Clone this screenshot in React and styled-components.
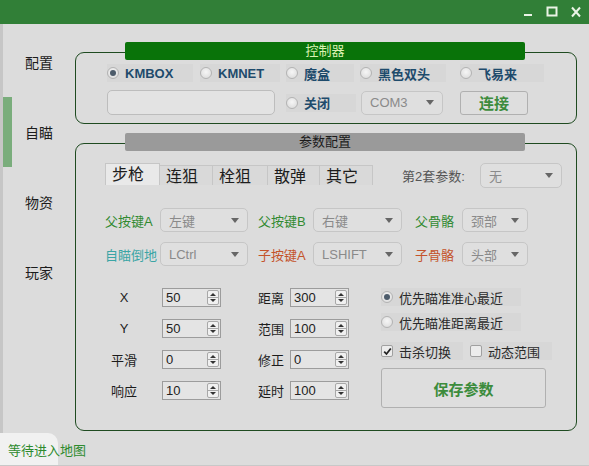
import React from 'react';
import styled, { createGlobalStyle } from 'styled-components';

const GlobalStyle = createGlobalStyle`
  html, body {
    margin: 0;
    padding: 0;
  }
  body {
    font-family: "Liberation Sans", "Noto Sans CJK SC", sans-serif;
    background: #dcdcdc;
  }
`;

const Window = styled.div`
  width: 589px;
  height: 466px;
  display: flex;
  flex-direction: column;
  background: #dcdcdc;
  overflow: hidden;
`;

const TitleBar = styled.div`
  height: 24px;
  flex: none;
  background: #317f37;
  display: flex;
  justify-content: flex-end;
  align-items: center;
  padding-right: 1px;
`;

const WinButton = styled.div`
  width: 24px;
  height: 24px;
  display: flex;
  align-items: center;
  justify-content: center;
`;

const Body = styled.div`
  flex: 1;
  display: flex;
  min-height: 0;
`;

const Sidebar = styled.nav`
  width: 72px;
  flex: none;
  border-left: 3px solid #c6c6c6;
  padding-top: 3px;
`;

const NavItem = styled.div`
  height: 70px;
  display: flex;
  align-items: center;
  padding-left: 22px;
  font-size: 14px;
  color: #1c1c1c;
  box-shadow: ${p => (p.$active ? 'inset 9px 0 0 #7aad7c' : 'none')};
`;

const Main = styled.main`
  flex: 1;
  padding: 18px 12px 0 0;
  display: flex;
  flex-direction: column;
`;

const Group = styled.section`
  display: flex;
  flex-direction: column;
  margin-bottom: 9px;
`;

const Legend = styled.div`
  height: 18px;
  margin: 0 52px 0 50px;
  background: ${p => p.$bg};
  color: ${p => p.$color};
  border-radius: 2px;
  font-size: 13px;
  line-height: 18px;
  text-align: center;
  position: relative;
  z-index: 1;
`;

const Box = styled.div`
  margin-top: -8px;
  height: ${p => p.$h}px;
  box-sizing: border-box;
  border: 1px solid #1f4b21;
  border-radius: 9px;
  padding: ${p => p.$pad};
  display: flex;
  flex-direction: column;
`;

const RadioRow = styled.div`
  display: grid;
  grid-template-columns: 93px 86px 74px 100px 84px;
  height: 18px;
  align-items: center;
`;

const RadioItem = styled.label`
  display: flex;
  align-items: center;
  gap: 6px;
  height: 18px;
  width: ${p => p.$w}px;
  background: ${p => (p.$plain ? 'transparent' : '#d7d7d7')};
  font-size: 13px;
  font-weight: ${p => (p.$bold ? 700 : 400)};
  color: ${p => (p.$bold ? '#1e4b6c' : '#2a2a2a')};
  white-space: nowrap;
`;

const Dot = styled.span`
  width: 12px;
  height: 12px;
  flex: none;
  box-sizing: border-box;
  border-radius: 50%;
  border: 1px solid #b3b3b3;
  background: radial-gradient(circle at 50% 40%, #f6f6f6, #d8d8d8);
  display: flex;
  align-items: center;
  justify-content: center;

  &::after {
    content: '';
    width: 6px;
    height: 6px;
    border-radius: 50%;
    background: ${p => (p.$on ? '#4d5c6b' : 'transparent')};
  }
`;

const ControlRow = styled.div`
  display: flex;
  align-items: center;
  margin-top: 8px;
`;

const TextInput = styled.div`
  width: 168px;
  height: 25px;
  box-sizing: border-box;
  border: 1px solid #bdbdbd;
  border-radius: 5px;
  background: #e3e3e3;
  margin-right: 11px;
`;

const Combo = styled.div`
  width: ${p => p.$w}px;
  height: ${p => p.$h || 24}px;
  box-sizing: border-box;
  border: 1px solid #c6c6c6;
  border-radius: 5px;
  background: #dfdfdf;
  display: flex;
  align-items: center;
  justify-content: space-between;
  padding: 0 8px 0 8px;
  font-size: 13px;
  color: #8a8a8a;
  margin-left: ${p => p.$ml || 0}px;

  &::after {
    content: '';
    border-left: 4px solid transparent;
    border-right: 4px solid transparent;
    border-top: 5px solid #666;
  }
`;

const Button = styled.button`
  width: ${p => p.$w}px;
  height: ${p => p.$h}px;
  margin-left: ${p => p.$ml || 0}px;
  margin-top: ${p => p.$mt || 0}px;
  border: 1px solid #b0b0b0;
  border-radius: 3px;
  background: #dedede;
  color: #3c8c3c;
  font-family: "Noto Sans CJK SC", sans-serif;
  font-weight: 700;
  font-size: 15px;
  padding: 0;
`;

const TopRow = styled.div`
  display: flex;
  align-items: center;
  height: 25px;
`;

const Tabs = styled.div`
  display: flex;
  align-self: flex-start;
  height: 22px;
`;

const Tab = styled.div`
  width: ${p => p.$w}px;
  box-sizing: border-box;
  margin-top: ${p => (p.$active ? 0 : 2)}px;
  height: ${p => (p.$active ? 22 : 20)}px;
  background: ${p => (p.$active ? '#e9e9e9' : '#d9d9d9')};
  border: 1px solid #c6c6c6;
  border-bottom: none;
  border-left: ${p => (p.$active ? '1px solid #c6c6c6' : 'none')};
  padding-left: 6px;
  font-size: 16px;
  line-height: 22px;
  color: #1d1d1d;
  overflow: hidden;
`;

const SetLabel = styled.span`
  margin-left: 29px;
  width: 78px;
  font-size: 13px;
  color: #555;
`;

const ComboGrid = styled.div`
  display: grid;
  grid-template-columns: 55px 98px 55px 102px 47px 66px;
  grid-auto-rows: 24px;
  row-gap: 10px;
  margin-top: 20px;
  align-items: center;
`;

const KeyLabel = styled.span`
  font-size: 13px;
  color: ${p => p.$color};
  white-space: nowrap;
`;

const Lower = styled.div`
  display: flex;
  margin-top: 22px;
`;

const SpinGrid = styled.div`
  display: grid;
  grid-template-columns: 57px 96px 32px 59px;
  grid-auto-rows: 19px;
  row-gap: 12px;
  align-items: center;
`;

const SpinLabel = styled.span`
  font-size: 13px;
  color: #1c1c1c;
  text-align: ${p => (p.$center ? 'center' : 'left')};
  padding-right: ${p => (p.$center ? 19 : 0)}px;
`;

const Spin = styled.div`
  width: 59px;
  height: 19px;
  box-sizing: border-box;
  border: 1px solid #9c9c9c;
  background: #e4e4e4;
  display: flex;
  align-items: center;
  justify-content: space-between;
  padding: 0 1px 0 3px;
  font-size: 13px;
  color: #222;
`;

const Stepper = styled.div`
  width: 12px;
  height: 15px;
  box-sizing: border-box;
  border: 1px solid #a8a8a8;
  border-radius: 2px;
  background: linear-gradient(#f0f0f0 0 45%, #a8a8a8 45% 55%, #f0f0f0 55%);
  display: flex;
  flex-direction: column;
  align-items: center;
  justify-content: space-around;

  span {
    width: 0;
    height: 0;
    border-left: 3px solid transparent;
    border-right: 3px solid transparent;
  }
  span:first-child {
    border-bottom: 3px solid #333;
  }
  span:last-child {
    border-top: 3px solid #333;
  }
`;

const RightCol = styled.div`
  margin-left: 32px;
  display: flex;
  flex-direction: column;
`;

const OptionRow = styled.div`
  display: flex;
  align-items: center;
  gap: 7px;
  height: 18px;
  margin-top: ${p => p.$mt || 0}px;
`;

const CheckItem = styled.label`
  display: flex;
  align-items: center;
  gap: 6px;
  width: ${p => p.$w}px;
  height: 18px;
  font-size: 13px;
  color: #2a2a2a;
  background: #d7d7d7;
  white-space: nowrap;
`;

const Box12 = styled.span`
  width: 12px;
  height: 12px;
  flex: none;
  box-sizing: border-box;
  border: 1px solid #a0a0a0;
  border-radius: 2px;
  background: #ececec;
  display: flex;
  align-items: center;
  justify-content: center;
`;

const StatusBar = styled.footer`
  height: 33px;
  flex: none;
  display: flex;
  border-bottom: 1px solid #c8c8c8;
  box-sizing: border-box;
`;

const StatusTab = styled.div`
  width: 58px;
  background: #f1f1f1;
  border-top-right-radius: 10px;
  padding-left: 8px;
  box-sizing: border-box;
  display: flex;
  align-items: center;
  white-space: nowrap;
  font-size: 13px;
  color: #2e8b2e;
`;

const Radio = ({ on, w, bold, plain, children }) => (
  <RadioItem $w={w} $bold={bold} $plain={plain}>
    <Dot $on={on} />
    {children}
  </RadioItem>
);

const SpinBox = ({ value }) => (
  <Spin>
    {value}
    <Stepper>
      <span />
      <span />
    </Stepper>
  </Spin>
);

const green = '#318a31';
const teal = '#3aa5a5';
const orange = '#c4532a';

const keyRows = [
  [['父按键A', green, '左键'], ['父按键B', green, '右键'], ['父骨骼', green, '颈部']],
  [['自瞄倒地', teal, 'LCtrl'], ['子按键A', orange, 'LSHIFT'], ['子骨骼', orange, '头部']],
];
const comboWidths = [88, 89, 66];

const spinRows = [
  ['X', '50', '距离', '300'],
  ['Y', '50', '范围', '100'],
  ['平滑', '0', '修正', '0'],
  ['响应', '10', '延时', '100'],
];

const tabs = [['步枪', 55], ['连狙', 53], ['栓狙', 55], ['散弹', 52], ['其它', 53]];

export default function App() {
  return (
    <Window>
      <GlobalStyle />
      <TitleBar>
        <WinButton>
          <svg width="12" height="12" viewBox="0 0 12 12">
            <rect x="2" y="8" width="8" height="2" fill="#eaf3e6" />
          </svg>
        </WinButton>
        <WinButton>
          <svg width="12" height="12" viewBox="0 0 12 12">
            <rect x="1.5" y="1.5" width="9" height="8" fill="none" stroke="#eaf3e6" strokeWidth="2" />
          </svg>
        </WinButton>
        <WinButton>
          <svg width="12" height="12" viewBox="0 0 12 12">
            <path d="M2 1.5 L10 10.5 M10 1.5 L2 10.5" stroke="#eaf3e6" strokeWidth="2" />
          </svg>
        </WinButton>
      </TitleBar>

      <Body>
        <Sidebar>
          <NavItem>配置</NavItem>
          <NavItem $active>自瞄</NavItem>
          <NavItem>物资</NavItem>
          <NavItem>玩家</NavItem>
        </Sidebar>

        <Main>
          <Group>
            <Legend $bg="#097309" $color="#dbf2b4">控制器</Legend>
            <Box $h={72} $pad="11px 0 7px 31px">
              <RadioRow>
                <Radio on bold w={86}>KMBOX</Radio>
                <Radio bold w={80}>KMNET</Radio>
                <Radio bold w={68}>魔盒</Radio>
                <Radio bold w={86}>黑色双头</Radio>
                <Radio bold w={84}>飞易来</Radio>
              </RadioRow>
              <ControlRow>
                <TextInput />
                <Radio bold w={70}>关闭</Radio>
                <Combo $w={82} $ml={5}>COM3</Combo>
                <Button $w={68} $h={24} $ml={17}>连接</Button>
              </ControlRow>
            </Box>
          </Group>

          <Group>
            <Legend $bg="#9a9a9a" $color="#1b1b1b">参数配置</Legend>
            <Box $h={288} $pad="19px 0 0 29px">
              <TopRow>
                <Tabs>
                  {tabs.map(([name, w], i) => (
                    <Tab key={name} $w={w} $active={i === 0}>{name}</Tab>
                  ))}
                </Tabs>
                <SetLabel>第2套参数:</SetLabel>
                <Combo $w={82} $h={25}>无</Combo>
              </TopRow>

              <ComboGrid>
                {keyRows.map(row =>
                  row.map(([label, color, value], i) => (
                    <React.Fragment key={label}>
                      <KeyLabel $color={color}>{label}</KeyLabel>
                      <Combo $w={comboWidths[i]}>{value}</Combo>
                    </React.Fragment>
                  ))
                )}
              </ComboGrid>

              <Lower>
                <SpinGrid>
                  {spinRows.map(([a, av, b, bv]) => (
                    <React.Fragment key={a}>
                      <SpinLabel $center>{a}</SpinLabel>
                      <SpinBox value={av} />
                      <SpinLabel>{b}</SpinLabel>
                      <SpinBox value={bv} />
                    </React.Fragment>
                  ))}
                </SpinGrid>

                <RightCol>
                  <OptionRow>
                    <Radio on w={140}>优先瞄准准心最近</Radio>
                  </OptionRow>
                  <OptionRow $mt={7}>
                    <Radio w={140}>优先瞄准距离最近</Radio>
                  </OptionRow>
                  <OptionRow $mt={11}>
                    <CheckItem $w={82}>
                      <Box12>
                        <svg width="9" height="9" viewBox="0 0 9 9">
                          <path d="M1.2 4.6 L3.5 7 L7.8 1.5" fill="none" stroke="#222" strokeWidth="1.8" />
                        </svg>
                      </Box12>
                      击杀切换
                    </CheckItem>
                    <CheckItem $w={82}>
                      <Box12 />
                      动态范围
                    </CheckItem>
                  </OptionRow>
                  <Button $w={165} $h={40} $mt={8}>保存参数</Button>
                </RightCol>
              </Lower>
            </Box>
          </Group>
        </Main>
      </Body>

      <StatusBar>
        <StatusTab>等待进入地图</StatusTab>
      </StatusBar>
    </Window>
  );
}
